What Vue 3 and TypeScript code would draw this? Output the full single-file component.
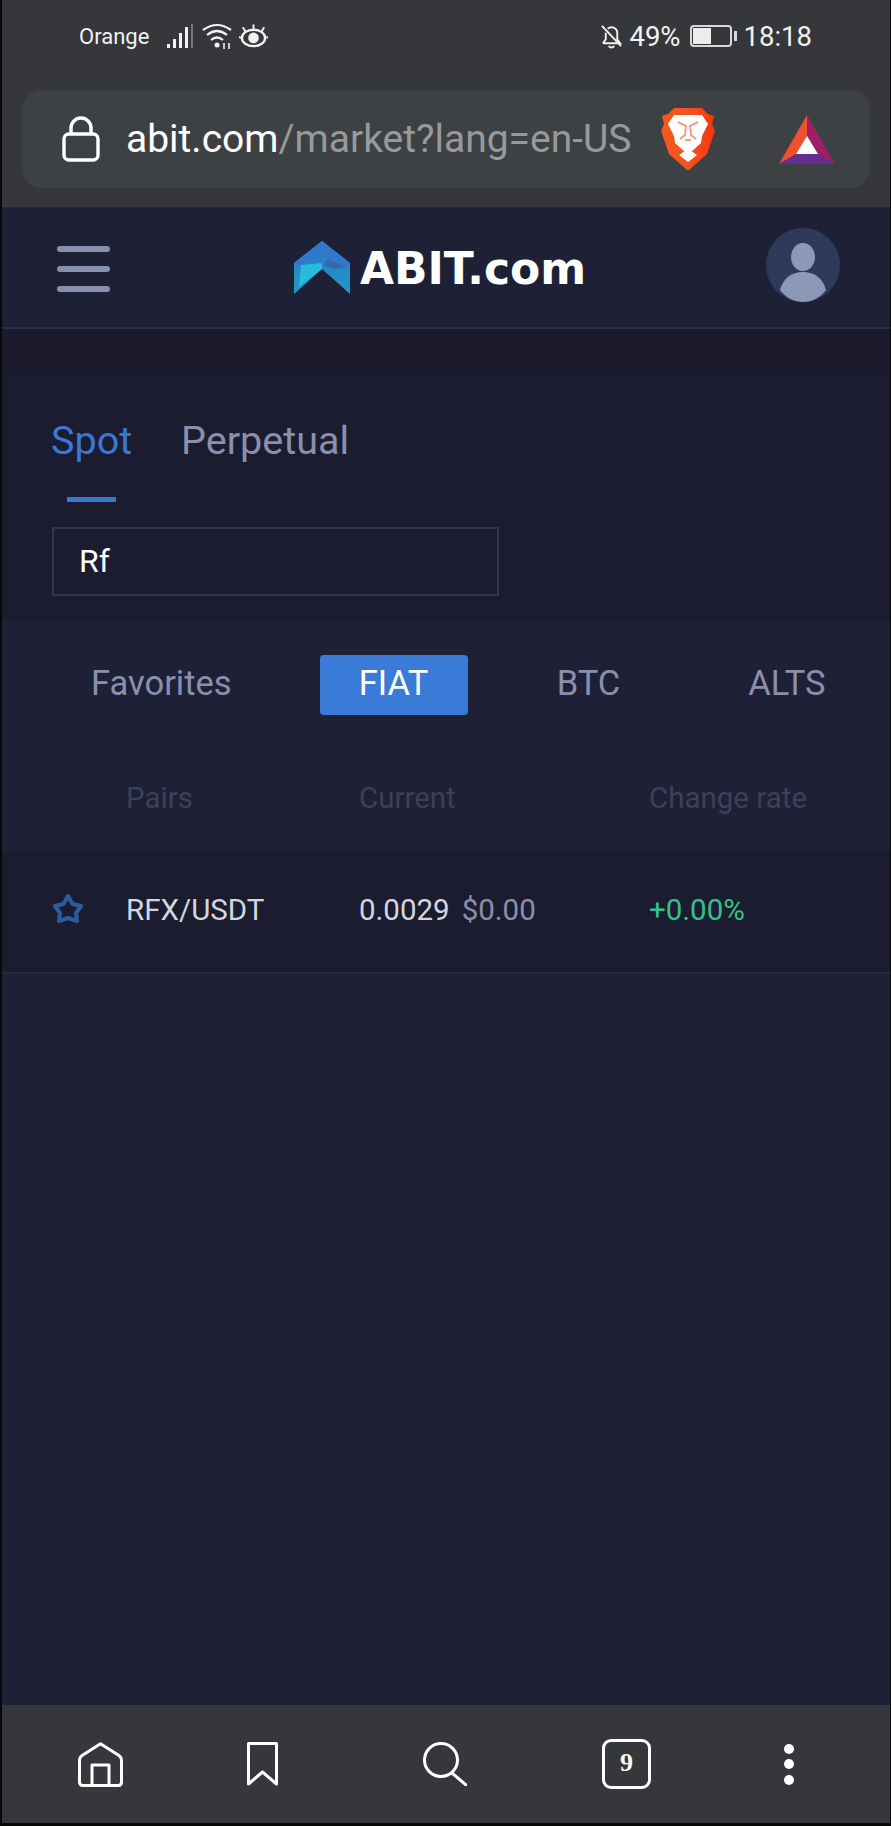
<script setup lang="ts">
const coins = ['Favorites', 'FIAT', 'BTC', 'ALTS'];
</script>

<template>
  <div class="phone">
    <div class="browser-top">
      <div class="status">
        <div class="status-left">
          <span class="carrier">Orange</span>
          <svg class="sig" width="28" height="25" viewBox="0 0 28 25">
            <rect x="1" y="20" width="3" height="4" fill="#f2f2f2" />
            <rect x="7" y="15" width="3" height="9" fill="#f2f2f2" />
            <rect x="13" y="9" width="3" height="15" fill="#f2f2f2" />
            <rect x="19" y="3" width="3" height="21" fill="#f2f2f2" />
            <rect x="25" y="0" width="2" height="24" fill="#77787b" />
          </svg>
          <svg class="wifi" width="32" height="26" viewBox="0 0 32 26" fill="none" stroke="#f2f2f2" stroke-width="2.2">
            <path d="M1 7 Q15 -3 29 7" />
            <path d="M5 12 Q15 4 25 12" />
            <path d="M9 17 Q15 12 21 17" />
            <circle cx="15" cy="22" r="2.5" fill="#f2f2f2" stroke="none" />
            <path d="M22 20v6M27 20v6" stroke-width="1.6" />
          </svg>
          <svg class="eye" width="29" height="26" viewBox="0 0 30 26" fill="none" stroke="#f2f2f2" stroke-width="2.4">
            <ellipse cx="15" cy="15" rx="12" ry="8.5" />
            <circle cx="15" cy="15" r="5.5" fill="#f2f2f2" stroke="none" />
            <path d="M15 7V1M7 9 4 4M23 9l3-5M2 15l-2-1M28 15l2-1" stroke-width="2" />
          </svg>
        </div>
        <div class="status-right">
          <svg width="23" height="25" viewBox="0 0 24 26" fill="none" stroke="#f2f2f2" stroke-width="2">
            <path d="M3 20h18l-3-4v-6a6 6 0 0 0-10-5M6 9v7l-3 4" />
            <path d="M2 2l20 21" />
            <path d="M9 23q3 3 6 0" />
          </svg>
          <span class="pct">49%</span>
          <span class="batt"><span class="batt-fill"></span></span>
          <span class="batt-tip"></span>
          <span class="clock">18:18</span>
        </div>
      </div>
      <div class="urlbar">
        <svg class="lock" width="38" height="46" viewBox="0 0 38 46" fill="none" stroke="#fff" stroke-width="3.4">
          <rect x="2" y="18" width="34" height="26" rx="5" />
          <path d="M9 18V12a10 10 0 0 1 20 0v6" />
        </svg>
        <div class="url"><span class="host">abit.com</span>/market?lang=en-US</div>
        <svg class="brave" width="54" height="64" viewBox="0 0 54 64">
          <defs>
            <linearGradient id="bg" x1="0" y1="0" x2="1" y2="0">
              <stop offset="0" stop-color="#f15a1f" />
              <stop offset="0.55" stop-color="#f4511e" />
              <stop offset="1" stop-color="#f5340f" />
            </linearGradient>
          </defs>
          <path d="M13 1H41L47 7 53 9 51 17 54 24 46 47 28 63H26L8 47 0 24 3 17 1 9 7 7Z" fill="url(#bg)" />
          <path d="M13 8H41L47 17 41 29 40 36 30 45 27 43 24 45 14 36 13 29 7 17Z" fill="#fff" />
          <path d="M17 15 25 19 24 28 19 32M37 15 29 19 30 28 35 32M24 33H30" fill="none" stroke="#f0a080" stroke-width="2" />
          <path d="M18 48 27 42 36 48 27 55Z" fill="#fff" />
        </svg>
        <svg class="bat" width="56" height="49" viewBox="0 0 56 49">
          <polygon points="28,0 0,49 17,39 28,21" fill="#f0502e" />
          <polygon points="28,0 56,49 39,39 28,21" fill="#9e1f63" />
          <polygon points="0,49 56,49 39,39 17,39" fill="#662d91" />
          <polygon points="28,21 39,39 17,39" fill="#fff" />
        </svg>
      </div>
    </div>

    <header class="site-header">
      <div class="burger"><i></i><i></i><i></i></div>
      <div class="brand">
        <svg width="57" height="54" viewBox="0 0 57 54">
          <defs>
            <linearGradient id="wing" x1="0" y1="0" x2="0" y2="1">
              <stop offset="0" stop-color="#2f74c4" />
              <stop offset="1" stop-color="#1f9cc6" />
            </linearGradient>
          </defs>
          <polygon points="28,0 56,22 56,53 28,28 0,53 0,22" fill="url(#wing)" />
          <polygon points="28,0 56,22 52,26 28,14 4,26 0,22" fill="#3078cc" />
          <polygon points="7,24 28,22 28,28 5,46" fill="#26bcdc" />
          <polygon points="34,18 52,26 40,28 30,24" fill="#3468a8" />
        </svg>
        <span class="brand-name">ABIT.com</span>
      </div>
      <div class="avatar">
        <svg width="74" height="74" viewBox="0 0 74 74">
          <circle cx="37" cy="37" r="37" fill="#2f3a5a" />
          <ellipse cx="37" cy="29" rx="12" ry="14" fill="#8c98b8" />
          <path d="M14 62C17 50 26 44 37 44S57 50 60 62C54 70 46 74 37 74S20 70 14 62Z" fill="#8c98b8" />
        </svg>
      </div>
    </header>

    <div class="strip"></div>

    <section class="market-type">
      <div class="type-tabs">
        <span class="type-tab on">Spot</span>
        <span class="type-tab">Perpetual</span>
      </div>
      <div class="type-line"></div>
      <div class="search">Rf</div>
    </section>

    <section class="coins">
      <span v-for="c in coins" :key="c" class="coin" :class="{ active: c === 'FIAT' }">{{ c }}</span>
    </section>

    <div class="thead">
      <span class="col-pair">Pairs</span>
      <span class="col-cur">Current</span>
      <span class="col-rate">Change rate</span>
    </div>

    <div class="row">
      <svg class="star" width="30" height="31" viewBox="0 0 30 31" fill="none" stroke="#2d5c9e" stroke-width="4" stroke-linejoin="round">
        <path d="M15 3 19.500 11 28 13 23 20 24 28 15 25 6 28 7 20 2 13 10.500 11Z" />
      </svg>
      <span class="col-pair pair">RFX/USDT</span>
      <span class="col-cur cur">0.0029<em>$0.00</em></span>
      <span class="col-rate rate">+0.00%</span>
    </div>

    <div class="fill"></div>

    <nav class="browser-nav">
      <svg width="45" height="45" viewBox="0 0 45 45" fill="none" stroke="#fff" stroke-width="3" stroke-linejoin="round">
        <path d="M5 43.500H40Q43.500 43.500 43.500 40V18Q43.500 15.500 41 13.500L22.500 1.800 4 13.500Q1.500 15.500 1.500 18V40Q1.500 43.500 5 43.500Z" />
        <path d="M14 43V23H31V43" />
      </svg>
      <svg class="nav-mark" width="31" height="44" viewBox="0 0 31 44" fill="none" stroke="#fff" stroke-width="3" stroke-linejoin="round">
        <path d="M1.500 1.500H29.500V42L15.500 30 1.500 42Z" />
      </svg>
      <svg class="nav-search" width="44" height="44" viewBox="0 0 44 44" fill="none" stroke="#fff" stroke-width="3" stroke-linecap="round">
        <circle cx="18" cy="18" r="16.500" />
        <path d="M29 31 43 43" />
      </svg>
      <span class="tabs-count">9</span>
      <span class="dots"><i></i><i></i><i></i></span>
    </nav>
  </div>
</template>

<style scoped>
.phone {
  width: 891px;
  height: 1826px;
  box-sizing: border-box;
  display: flex;
  flex-direction: column;
  border-left: 2px solid #08080a;
  border-right: 1px solid #08080a;
  border-bottom: 3px solid #08080a;
  background: #1e2136;
  font-family: Roboto, "Liberation Sans", sans-serif;
  overflow: hidden;
}
.browser-top {
  height: 207px;
  flex-shrink: 0;
  background: #36373b;
  box-sizing: border-box;
  padding: 0 20px;
}
.status {
  height: 90px;
  box-sizing: border-box;
  display: flex;
  align-items: center;
  justify-content: space-between;
  padding: 0 58px 18px 57px;
  color: #f2f2f2;
}
.status-left,
.status-right {
  display: flex;
  align-items: center;
}
.carrier {
  font-size: 22px;
  margin-right: 17px;
}
.wifi {
  margin-left: 8px;
}
.eye {
  margin-left: 5px;
}
.pct {
  font-size: 27.5px;
  margin-left: 6px;
  margin-right: 9px;
}
.batt {
  width: 42px;
  height: 22px;
  border: 2px solid #d8d8d8;
  border-radius: 4px;
  padding: 1px;
  box-sizing: border-box;
  display: block;
}
.batt-fill {
  display: block;
  width: 18px;
  height: 100%;
  background: #ececec;
}
.batt-tip {
  width: 3px;
  height: 10px;
  margin-left: 2px;
  background: #d8d8d8;
  margin-right: 7px;
}
.clock {
  font-size: 27.5px;
}
.urlbar {
  height: 98px;
  background: #3e4144;
  border-radius: 20px;
  display: flex;
  align-items: center;
  padding-left: 40px;
}
.lock {
  flex-shrink: 0;
}
.url {
  margin-left: 26px;
  width: 510px;
  flex-shrink: 0;
  font-size: 39px;
  color: #97999c;
  white-space: nowrap;
  overflow: hidden;
}
.host {
  color: #fff;
}
.brave {
  margin-left: 25px;
  flex-shrink: 0;
}
.bat {
  margin-left: 64px;
  flex-shrink: 0;
}
.site-header {
  height: 122px;
  flex-shrink: 0;
  box-sizing: border-box;
  border-top: 1px solid #22263c;
  border-bottom: 2px solid #2a3048;
  display: flex;
  align-items: center;
  padding: 0 50px 0 55px;
  justify-content: space-between;
  background: #1e2136;
}
.burger {
  width: 53px;
  margin-top: 2px;
  display: flex;
  flex-direction: column;
  gap: 14px;
}
.burger i {
  display: block;
  height: 6px;
  border-radius: 3px;
  background: #8791ad;
}
.brand {
  display: flex;
  align-items: center;
  gap: 9px;
  margin-left: 4px;
}
.brand-name {
  font-family: "DejaVu Sans", sans-serif;
  font-weight: 700;
  font-size: 44px;
  line-height: 54px;
  margin-top: 3px;
  color: #fff;
}
.avatar {
  margin-bottom: 2px;
}
.strip {
  height: 46px;
  flex-shrink: 0;
  background: #1a1a2c;
}
.market-type {
  height: 247px;
  flex-shrink: 0;
  box-sizing: border-box;
  padding: 41px 0 0 49px;
  background: #1b1c30;
  border-bottom: 1px solid #22253a;
}
.type-tabs {
  display: flex;
  gap: 49px;
  font-size: 39.500px;
  line-height: 50px;
}
.type-tab {
  color: #8b8fae;
}
.type-tab.on {
  color: #3a78d4;
}
.type-line {
  width: 49px;
  height: 5px;
  margin: 31px 0 25px 16px;
  background: #3a78d4;
}
.search {
  width: 447px;
  height: 69px;
  margin-left: 1px;
  box-sizing: border-box;
  border: 2px solid #33364a;
  padding-left: 25px;
  line-height: 65px;
  font-size: 32px;
  color: #fff;
}
.coins {
  height: 122px;
  flex-shrink: 0;
  display: flex;
  align-items: center;
  font-size: 34.500px;
  color: #8b8fae;
  padding: 2px 0 0 0;
}
.coin {
  margin-bottom: 4px;
}
.coin:nth-child(1) {
  margin-left: 89px;
}
.coin.active {
  margin-left: 88px;
  margin-bottom: 0;
  width: 148px;
  height: 60px;
  line-height: 56px;
  text-align: center;
  border-radius: 4px;
  background: #3a7bd8;
  color: #fff;
}
.coin:nth-child(3) {
  margin-left: 89px;
}
.coin:nth-child(4) {
  margin-left: 128px;
}
.thead {
  height: 104px;
  flex-shrink: 0;
  box-sizing: border-box;
  display: flex;
  align-items: center;
  font-size: 29.500px;
  color: #3c4059;
}
.col-pair {
  margin-left: 124px;
  width: 233px;
}
.col-cur {
  width: 290px;
}
.row {
  height: 124px;
  flex-shrink: 0;
  box-sizing: border-box;
  padding-bottom: 2px;
  display: flex;
  align-items: center;
  background: #1b1c30;
  border-bottom: 2px solid #272b40;
  font-size: 29.500px;
  color: #d4d6df;
}
.row .col-pair {
  margin-left: 39px;
}
.star {
  margin-left: 51px;
  margin-right: 4px;
  margin-bottom: 3px;
  flex-shrink: 0;
}
.cur em {
  font-style: normal;
  color: #8b8fae;
  margin-left: 12px;
}
.rate {
  color: #37c08a;
}
.fill {
  flex: 1;
  background: #1e2136;
}
.browser-nav {
  height: 118px;
  flex-shrink: 0;
  background: #36373b;
  display: flex;
  align-items: center;
  padding-left: 76px;
}
.nav-mark {
  margin-left: 124px;
}
.nav-search {
  margin-left: 145px;
}
.tabs-count {
  margin-left: 135px;
  width: 49px;
  height: 50px;
  box-sizing: border-box;
  border: 3px solid #fff;
  border-radius: 9px;
  text-align: center;
  font-family: "Liberation Serif", serif;
  font-weight: 700;
  font-size: 26px;
  line-height: 42px;
  color: #fff;
}
.dots {
  margin-left: 133px;
  display: flex;
  flex-direction: column;
  gap: 5.500px;
}
.dots i {
  display: block;
  width: 10px;
  height: 10px;
  border-radius: 50%;
  background: #fff;
}
</style>
